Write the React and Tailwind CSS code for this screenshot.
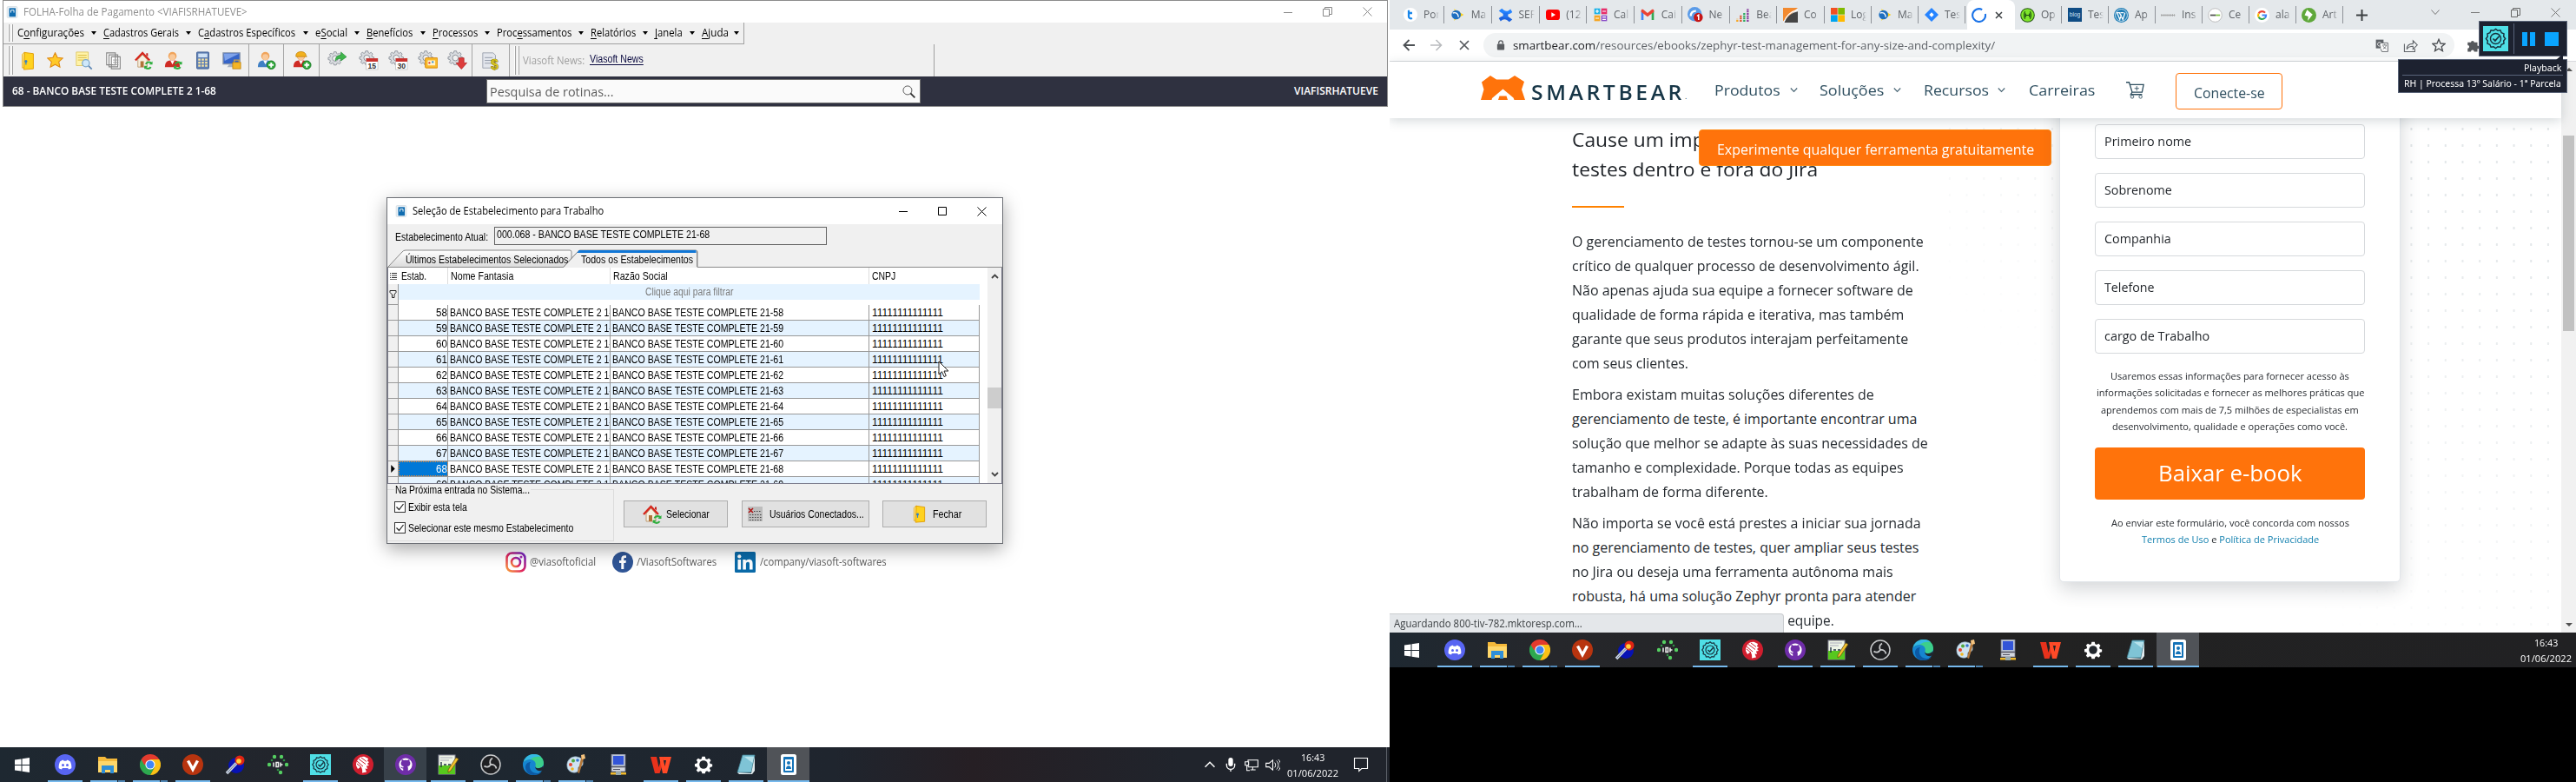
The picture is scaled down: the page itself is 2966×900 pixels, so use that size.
import React, { useLayoutEffect, useRef, useState } from 'react';

/* Single-line label condensed or widened to the given advance width. */
function T({ w, className = '', children }) {
  const ref = useRef(null);
  const [scale, setScale] = useState(1);
  useLayoutEffect(() => {
    const n = ref.current.offsetWidth;
    if (n) setScale(w / n);
  }, [w, children]);
  return (
    <span className={`block shrink-0 whitespace-nowrap ${className}`} style={{ width: w }}>
      <span ref={ref} className="inline-block origin-left" style={{ transform: `scaleX(${scale})` }}>
        {children}
      </span>
    </span>
  );
}

const Svg = ({ s = 24, vb = '0 0 24 24', className = '', children }) => (
  <svg width={s} height={s} viewBox={vb} className={`block shrink-0 ${className}`} fill="none">
    {children}
  </svg>
);

/* ---------- shared glyphs ---------- */
const GEAR = 'M10 1h4l.7 3 2 .9L19.400 3.300 22 6l-1.700 2.600.8 2 2.900.7v3.400l-3 .7-.8 2L21.900 20 19.400 22.300l-2.600-1.700-2 .8L14 24h-4l-.7-2.700-2-.8-2.700 1.700L2.100 19.700l1.700-2.500-.8-2L0 14.500v-3.600l3-.7.8-2L2.200 5.600 4.700 3.200l2.600 1.700 2-.9z';
const GearShape = ({ fill = '#d9dce0', stroke = '#8b9098' }) => (
  <g>
    <path d={GEAR} transform="translate(1 0) scale(.72)" fill={fill} stroke={stroke} strokeWidth="1.3" />
    <circle cx="9.700" cy="9" r="3.500" fill="#f0f0f0" stroke={stroke} />
  </g>
);
const Door = ({ s = 22 }) => (
  <Svg s={s}>
    <path d="M5 4l3-3v19l-3 1z" fill="#ffe88a" stroke="#e0a100" strokeWidth=".8" />
    <path d="M8 1.500L19 3v19L7 23z" fill="#ffd21f" stroke="#e09b00" strokeWidth="1" />
    <circle cx="9.700" cy="12.500" r="1.700" fill="#2d7fd0" />
    <path d="M9.700 13v4" stroke="#2d7fd0" strokeWidth="1.300" />
  </Svg>
);
const Refresh = () => (
  <g stroke="#2fae3f" strokeWidth="2.200" fill="none">
    <path d="M21.500 15.500c-2-2.300-6-1.800-7 1M13.500 20c1.500 2.500 5.500 2.500 7 0" />
    <path d="M22.500 13v4h-4zM12.700 22.500v-4h4z" fill="#2fae3f" stroke="none" />
  </g>
);
const House = ({ s = 24 }) => (
  <Svg s={s}>
    <path d="M5 11v9h11v-9l-5.500-6z" fill="#f7efe0" stroke="#b48a5a" strokeWidth=".8" />
    <path d="M2 12l8.500-9L19 12" stroke="#d5261b" strokeWidth="2.400" />
    <path d="M15 3.500h2v4l-2-2z" fill="#c3221a" />
    <path d="M8 20v-7h4v7z" fill="#b1733a" />
    <Refresh />
  </Svg>
);
const Person = ({ body = '#cf2b25', hair = '#f0a35a', hat, children }) => (
  <Svg s={23}>
    <path d="M2 20c0-6 3-7.500 6.500-8h5C17 12.500 20 14 20 20z" fill={body} />
    <path d="M8.500 12l2.500 5 2.500-5z" fill="#fff" />
    <circle cx="11" cy="6.800" r="5" fill={hair} />
    <circle cx="11" cy="8" r="3.600" fill="#f9c99a" />
    {hat && <path d="M5 6c0-6 12-6 12 0l1 1.500H5z" fill="#f2b01e" stroke="#b97a00" strokeWidth=".7" />}
    {children}
  </Svg>
);
const Plus = () => (
  <g>
    <circle cx="18" cy="17.500" r="5" fill="#2fa83a" stroke="#1c7c28" />
    <path d="M18 14.500v6M15 17.500h6" stroke="#fff" strokeWidth="2" />
  </g>
);
const Cal = ({ n }) => (
  <g>
    <rect x="9" y="10" width="14" height="13" fill="#fff" stroke="#bbb" strokeWidth=".7" />
    <rect x="9" y="9.500" width="14" height="4" fill="#c9302c" />
    <text x="16" y="22" textAnchor="middle" fontSize="9" fontWeight="700" fill="#333" fontFamily="Liberation Sans, sans-serif">{n}</text>
  </g>
);
const AppGlyph = () => (
  <Svg s={14}>
    <rect x="2" y="1" width="20" height="22" rx="2" fill="#eef3f7" stroke="#c5d0d8" />
    <rect x="6" y="4" width="13" height="17" fill="#0f6cb0" />
    <path d="M9.500 13V8h6v5" stroke="#fff" strokeWidth="1.600" />
  </Svg>
);
const TestComplete = ({ s = 24, bg = '#4fdfe6' }) => (
  <Svg s={s}>
    <rect width="24" height="24" fill={bg} />
    <path d="M12 2.800l2 1.600 2.500-.4 1 2.400 2.400 1-.3 2.500 1.600 2.100-1.600 2.100.3 2.500-2.400 1-1 2.400-2.500-.4-2 1.600-2-1.600-2.500.4-1-2.400-2.400-1 .3-2.500L2.800 12l1.600-2.100-.3-2.500 2.400-1 1-2.400 2.500.4z" stroke="#17313d" strokeWidth="1.200" />
    <circle cx="12" cy="12" r="5" stroke="#17313d" strokeWidth="1.200" />
    <path d="M9.500 12l2 2 4-4.500" stroke="#17313d" strokeWidth="1.400" />
  </Svg>
);

/* ---------- Windows taskbar ---------- */
const dockIcons = [
  <Svg><circle cx="12" cy="12" r="12" fill="#5865f2" /><path d="M6 8.500c2-1.500 3-1.700 4-1.800l.5 1h3l.5-1c1 .1 2 .3 4 1.800 1 2.500 1.600 5 1.300 7.500-1.200 1-2.500 1.300-3.300 1.500l-.8-1.500h-6.400L8 17.500c-.8-.2-2.100-.5-3.300-1.500C4.400 13.500 5 11 6 8.500z" fill="#fff" /><circle cx="9.500" cy="12.500" r="1.500" fill="#5865f2" /><circle cx="14.500" cy="12.500" r="1.500" fill="#5865f2" /></Svg>,
  <Svg><path d="M1 3h8l2 2h12v16H1z" fill="#f5b93a" /><path d="M1 8h22v13H1z" fill="#ffd76a" /><path d="M5 13h14v9h-4v-4H9v4H5z" fill="#2f8fd8" /></Svg>,
  <Svg><path d="M1.600 6A12 12 0 0 0 12 24l5.200-9L12 12z" fill="#2da94f" /><path d="M12 6h10.400a12 12 0 0 1-10.400 18l5-9z" fill="#fbc116" /><path d="M1.600 6A12 12 0 0 1 22.400 6H12v6H5z" fill="#e33b2e" /><circle cx="12" cy="12" r="5.600" fill="#fff" /><circle cx="12" cy="12" r="4.500" fill="#4086f4" /></Svg>,
  <Svg><circle cx="12" cy="12" r="12" fill="#b8340f" /><path d="M6.500 7.500L12 17.500l5.500-10" stroke="#fff" strokeWidth="3.400" /></Svg>,
  <Svg><circle cx="13" cy="13" r="9" fill="#0712b4" /><circle cx="17" cy="7" r="5.500" fill="#e02413" /><circle cx="16" cy="8" r="2.800" fill="#ffd23a" /><path d="M2 22L13 10.500" stroke="#c9d3e2" strokeWidth="3.500" /><path d="M3 21L13 10.500" stroke="#6d7a92" strokeWidth="1" /></Svg>,
  <Svg>{[[8, 3], [16, 3], [2, 12], [22, 12], [15, 21], [5, 7], [19, 7], [12, 18]].map(([x, y], i) => <circle key={i} cx={x} cy={y} r={i > 4 ? 1.300 : 2.200} fill={i > 4 ? '#2f8f45' : '#55cf62'} />)}<path d="M7 9.500v5M10 9.500v5h2.500v-5zM15 9.500v5M15 12h2.500" stroke="#f0f0f0" strokeWidth="1.500" /></Svg>,
  <TestComplete />,
  <Svg><circle cx="12" cy="12" r="12" fill="#d01e2e" /><path d="M4 13C4 7 8 2 14 3l4 2-1 3 2 1-2 2 2 2-3 .5 1 3.500-2.500-.5 1.500 4-5 1c.5-3 0-5-1.500-7L6 17z" fill="#fff" /><path d="M5 8l7 6M7 5.500l8 6M10 4l6 4.500M5 11l5 4" stroke="#d01e2e" strokeWidth="1" /></Svg>,
  <Svg><circle cx="12" cy="12" r="12" fill="#6f2da8" /><path d="M12 4.500a7.500 7.500 0 0 0-2.800 14.500v-2.600c-2 .3-2.600-1-3-1.900 1.500-.4 1.600 1 3 .9.100-.6.400-1 .7-1.300-2-.3-3.300-1.200-3.300-3.600 0-.9.300-1.600.9-2.200-.2-.7-.1-1.600.1-2.200.9 0 1.700.5 2.300.9a8 8 0 0 1 4.200 0c.6-.4 1.400-.9 2.300-.9.200.6.300 1.500.1 2.200.6.600.9 1.300.9 2.200 0 2.400-1.300 3.300-3.300 3.600.4.400.7 1 .7 2V19A7.500 7.500 0 0 0 12 4.500z" fill="#fff" /></Svg>,
  <Svg><rect x="1" y="1" width="19" height="22" fill="#eef5e6" stroke="#889" /><path d="M1 13h19v10H1z" fill="#57c81e" /><path d="M3 4h14M3 7h10" stroke="#aab" strokeWidth="1.200" /><path d="M4 9v6M7 12h3M12 12h3" stroke="#234" strokeWidth="1.400" /><path d="M12 18L21 4l3 1.500L15 19l-3 2z" fill="#f2c12e" stroke="#6b5310" strokeWidth=".8" /></Svg>,
  <Svg><circle cx="12" cy="12" r="11" fill="#1f2023" stroke="#c7c9cb" strokeWidth="1.500" /><path d="M12 12c-1.500-3-.5-6 2-7.500M12 12c3.500-.5 6 1.500 6.500 4.500M12 12c-2 3-5 3.500-7.500 1.500" stroke="#c7c9cb" strokeWidth="1.800" /></Svg>,
  <Svg><circle cx="12" cy="12" r="12" fill="#1686d0" /><path d="M1 9C3 2 9 0 13 0c7 0 11 5 11 10 0 4-3 6-6 6-3 0-4-1-3.500-2.500C16 9 12 6 8 6 4 6 2 7.500 1 9z" fill="#3ccf8b" /><path d="M1 9C3 2 9 0 13 0c3 0 6 1 8 3-5-1-9 0-13 3C4 6 2 7.500 1 9z" fill="#35b7e6" /><path d="M8 12c-1 6 3 10 9 10 2 0 4-1 5-2-2 3-6 4-10 4-5 0-9-4-9-9 0-4 3-6 6-6-1 1-1 2-1 3z" fill="#0c59a4" /><path d="M14 13.500c0 2 2 3 5 2.500 2-.4 4-1.500 4.500-3L24 18l-3 1c-4 1-7-2-7-5.500z" fill="#20262e" /></Svg>,
  <Svg><path d="M2 14C1 7 7 2 13 3c6 .6 8 5 7 9-1 3-4 1-5 3s1 5-3 6c-5 .8-9.500-2-10-7z" fill="#cfe3f1" stroke="#8da9bd" strokeWidth=".7" /><circle cx="6" cy="12" r="2" fill="#e0452f" /><circle cx="9" cy="7.500" r="2" fill="#4fa83e" /><circle cx="14" cy="7" r="1.800" fill="#3474cc" /><circle cx="8" cy="17" r="1.800" fill="#f0b51e" /><path d="M19 1l3 1-6 20-2-1z" fill="#b4783a" /><path d="M18 1l4-1 1 5-4 1z" fill="#f3c27e" /></Svg>,
  <Svg><rect x="4" y="0" width="16" height="14" fill="#b9c4d6" stroke="#778" strokeWidth=".8" /><rect x="6" y="2" width="12" height="10" fill="#3355d8" /><rect x="4" y="15" width="16" height="5" fill="#d3d8df" stroke="#778" strokeWidth=".8" /><path d="M6 17.500h8" stroke="#556" /><rect x="3" y="21" width="18" height="2.500" fill="#f0b92c" /><rect x="9" y="20" width="6" height="4" fill="#9aa" /></Svg>,
  <Svg><path d="M0 3h7l2.500 12L12 7l2.500 3-4 12H5z" fill="#e8321c" /><path d="M10 3h4l2.500 11L18 7h-3l-1-4h10l-5 19h-5z" fill="#ff4a27" /></Svg>,
  <Svg><path d={GEAR} transform="translate(2 2) scale(.84)" fill="#fff" /><circle cx="12" cy="12" r="4.800" fill="#22272d" /></Svg>,
  <Svg><path d="M8 1h14l-4 20H2z" fill="#7fc4d6" stroke="#3f7f92" strokeWidth=".8" /><path d="M10 3h11l-1.500 7z" fill="#b7e3ec" /><path d="M2 21l16 1 4-20v17l-3 4H4z" fill="#dfe9ec" /></Svg>,
  <Svg><rect x="3" y="0" width="18" height="24" rx="2.500" fill="#fff" /><rect x="6" y="3" width="12" height="18" rx="1" fill="#1573b8" /><rect x="8" y="6" width="8" height="13" fill="#fff" /><circle cx="12" cy="10" r="2" fill="#1573b8" /><path d="M9 17c0-5 6-5 6 0z" fill="#1573b8" /></Svg>,
];
const DOCK_LINES = { 0: 1, 1: 2, 2: 2, 3: 1, 6: 1, 8: 1, 9: 1, 10: 1, 11: 2, 12: 2, 14: 1, 15: 1, 16: 1, 17: 1 };

function Taskbar({ active, className, children }) {
  return (
    <div className={`flex h-10 shrink-0 items-center ${className}`}>
      <div className="flex h-full w-[50px] shrink-0 items-center justify-center">
        <Svg s={17} vb="0 0 17 17"><path d="M0 2.500L7.500 1.500V8H0zM8.500 1.300L17 0v8H8.500zM0 9h7.500v6.500L0 14.500zM8.500 9H17v8l-8.500-1.300z" fill="#fff" /></Svg>
      </div>
      {dockIcons.map((icon, i) => (
        <div key={i} className={`flex h-full w-[49px] shrink-0 flex-col items-center justify-between ${i === 17 ? 'bg-[#505358]' : active === i ? 'bg-[#38414a]' : ''}`}>
          <div className="mt-2">{icon}</div>
          {DOCK_LINES[i] && (
            <div className={`flex h-0.5 shrink-0 ${i === 17 || active === i ? 'w-[48px]' : 'w-10'}`}>
              <div className="flex-1 bg-[#76b9ed]" />
              {DOCK_LINES[i] === 2 && <div className="ml-px w-[8px] bg-[#4f86b4]" />}
            </div>
          )}
        </div>
      ))}
      <div className="flex-1" />
      {children}
    </div>
  );
}
const Clock = () => (
  <div className="flex w-[62px] shrink-0 flex-col items-center gap-[3px] text-[11.5px] leading-[15px] text-white">
    <T w={27}>16:43</T>
    <T w={59}>01/06/2022</T>
  </div>
);

/* ---------- FOLHA window ---------- */
const MENUS = [
  [['C', 'o', 'nfigurações'], 77, 22], [['', 'C', 'adastros Gerais'], 87, 22], [['C', 'a', 'dastros Específicos'], 112, 23],
  [['e', 'S', 'ocial'], 37, 22], [['', 'B', 'enefícios'], 53, 23], [['', 'P', 'rocessos'], 52, 22],
  [['Proc', 'e', 'ssamentos'], 86, 22], [['', 'R', 'elatórios'], 52, 22], [['', 'J', 'anela'], 32, 22], [['', 'A', 'juda'], 31, 18],
];
const Grip = () => (
  <div className="flex h-[calc(100%-4px)] w-[14px] shrink-0 items-stretch gap-[2px] pl-[5px]">
    <i className="w-[2px] border-r border-[#a0a0a0] bg-white" /><i className="w-[2px] border-r border-[#a0a0a0] bg-white" />
  </div>
);
const Cell = ({ w = 'w-[34px]', children }) => <div className={`flex h-full shrink-0 items-center justify-center ${w}`}>{children}</div>;
const Div = () => <div className="h-full w-px shrink-0 bg-[#a5a5a5]" />;

function FolhaWindow() {
  return (
    <div className="mx-[3px] flex h-[123px] w-[1595px] shrink-0 flex-col border border-[#8c8c8c] bg-[#f0f0f0] font-['Open_Sans',sans-serif]">
      <div className="flex h-[25px] shrink-0 items-center bg-white pl-[3px]">
        <AppGlyph />
        <T w={258} className="ml-[6px] text-[13px] text-[#8e8e8e]">FOLHA-Folha de Pagamento &lt;VIAFISRHATUEVE&gt;</T>
        <div className="flex-1" />
        <div className="flex items-center text-[#8a8a8a]">
          <Svg s={10} vb="0 0 10 10"><path d="M0 5.500h10" stroke="#888" /></Svg>
          <Svg s={11} vb="0 0 11 11" className="ml-[35px]"><path d="M.5 2.500h7v8h-7zM2.500 2V.5h8v8h-2.500" stroke="#888" /></Svg>
          <Svg s={11} vb="0 0 11 11" className="mr-[17px] ml-[35px]"><path d="M.5.5l10 10M10.500.5l-10 10" stroke="#888" /></Svg>
        </div>
      </div>
      <div className="flex h-[25px] w-[853px] shrink-0 items-center border-r border-b border-[#a0a0a0]">
        <Grip />
        <div className="flex items-center pl-[2px] text-[12px] text-black">
          {MENUS.map(([[a, u, b], w, gap], i) => (
            <div key={i} className="flex items-center">
              <T w={w}>{a}<span className="underline underline-offset-2">{u}</span>{b}</T>
              <div className="flex shrink-0 items-center justify-center" style={{ width: gap }}>
                <Svg s={6} vb="0 0 6 4"><path d="M0 0h6L3 4z" fill="#000" /></Svg>
              </div>
            </div>
          ))}
        </div>
      </div>
      <div className="flex h-[37px] w-[1072px] shrink-0 items-center border-r border-[#a0a0a0]">
        <Grip />
        <Cell w="w-[28px]"><Door /></Cell>
        <Cell><Svg s={19}><path d="M12 1l3.300 7 7.700.9-5.700 5.200 1.600 7.600L12 18l-6.900 3.700 1.600-7.600L1 8.900 8.700 8z" fill="#ffc928" stroke="#e08a12" strokeWidth="1.400" /></Svg></Cell>
        <Cell><Svg s={22}><path d="M2 1h15v17H2z" fill="#fff3a8" stroke="#d8bd4c" strokeWidth=".8" /><path d="M4 5h11M4 8h11M4 11h8" stroke="#d8b93c" /><circle cx="14" cy="15" r="4.500" fill="#cfe8fa" stroke="#7ca8cc" strokeWidth="1.400" /><path d="M17.500 18.500l4 4" stroke="#5f88b5" strokeWidth="2" /></Svg></Cell>
        <Cell><Svg s={22}><path d="M3 2h11v15H3zM6 4.500h11v15H6zM9 7h11v15H9z" fill="#fff" stroke="#858585" strokeWidth="1.200" /><path d="M11 11h7M11 14h7M11 17h7" stroke="#9a9a9a" /></Svg></Cell>
        <Cell><House s={23} /></Cell>
        <Cell><Person><Refresh /></Person></Cell>
        <Cell><Svg s={21}><rect x="4" y="1" width="16" height="22" rx="1" fill="#5f7fb4" stroke="#3f5f94" /><rect x="6" y="3" width="12" height="5" fill="#cfe2f5" /><path d="M6 11h12M6 15h12M6 19h12" stroke="#f5e3a4" strokeWidth="2.600" strokeDasharray="3 1.500" /></Svg></Cell>
        <Cell><Svg s={22}><rect x="1" y="2" width="21" height="14" fill="#3564c8" stroke="#8b97ab" strokeWidth="1.400" /><path d="M2 3h19L3 12z" fill="#7fa3ea" /><path d="M6 20h10l-2-4H9z" fill="#a8b2c0" /><rect x="13" y="14" width="10" height="8" fill="#f5b524" stroke="#b87d05" strokeWidth=".8" /><path d="M15 14v-3h6v3" stroke="#c9a04a" strokeWidth="1.500" /></Svg></Cell>
        <div className="w-[2px]" /><Div />
        <Cell w="w-[39px]"><Person body="#3f7fc4"><Plus /></Person></Cell><Div />
        <Cell w="w-[40px]"><Person hat><Plus /></Person></Cell><Div />
        <Cell w="w-[39px]"><Svg s={22}><GearShape /><path d="M10 12c0-5 3-7 7-7V1l7 6-7 5V9c-3 0-5 1-7 3z" fill="#3fb54a" stroke="#1f8a34" strokeWidth=".7" /></Svg></Cell>
        <Cell><Svg s={23}><GearShape /><Cal n="15" /></Svg></Cell>
        <Cell><Svg s={23}><GearShape /><Cal n="30" /></Svg></Cell>
        <Cell><Svg s={23}><GearShape /><rect x="9" y="9" width="15" height="12" rx="1" fill="#f8b92a" stroke="#d98a0b" /><rect x="12" y="12" width="9" height="6" fill="#fff4d0" /><circle cx="14" cy="15" r="1.200" fill="#d33" /><circle cx="18" cy="14" r="1.200" fill="#2a8fd0" /></Svg></Cell>
        <Cell><Svg s={23}><GearShape /><path d="M14 9h6v6h3.500L17 22.500 10.500 15H14z" fill="#dd3c3c" stroke="#b52222" strokeWidth=".8" /></Svg></Cell>
        <Div />
        <Cell w="w-[42px]"><Svg s={22}><path d="M2 2h13l3 3v16H2z" fill="#e3e6ec" stroke="#9aa1ac" /><path d="M4.500 8h10M4.500 11.500h10M4.500 15h10" stroke="#8f97a5" /><text x="17" y="22.500" textAnchor="middle" fontSize="17" fontWeight="700" fill="#f2dc1f" stroke="#8d7c00" strokeWidth=".7" fontFamily="Liberation Sans, sans-serif">$</text></Svg></Cell>
        <Div /><Grip />
        <T w={71} className="ml-px text-[12px] text-[#9f9f9f]">Viasoft News:</T>
        <T w={62} className="mb-[3px] ml-[6px] font-['Liberation_Sans',sans-serif] text-[12px] text-[#0a0a40]"><span className="underline underline-offset-2">Viasoft News</span></T>
      </div>
      <div className="flex h-[34px] shrink-0 items-center bg-[#2f3140] pl-[10px] text-white">
        <T w={235} className="text-[12px] font-semibold">68 - BANCO BASE TESTE COMPLETE 2 1-68</T>
        <div className="ml-[311px] flex h-[28px] w-[500px] items-center justify-between border border-[#6f6f6f] bg-[#fafafa] pr-[5px] pl-[3px]">
          <T w={142} className="text-[15px] text-[#5c5c5c]">Pesquisa de rotinas...</T>
          <Svg s={15}><circle cx="9.500" cy="9.500" r="8" stroke="#555" strokeWidth="1.500" /><path d="M15 15l8 8" stroke="#333" strokeWidth="3" /></Svg>
        </div>
        <div className="flex-1" />
        <T w={97} className="mr-[10px] text-[12px] font-semibold">VIAFISRHATUEVE</T>
      </div>
    </div>
  );
}

/* ---------- dialog ---------- */
const ROWS = [58, 59, 60, 61, 62, 63, 64, 65, 66, 67, 68, 69];
const Check = ({ w, children }) => (
  <div className="flex h-[13px] items-center">
    <div className="flex size-[13px] items-center justify-center border border-[#333] bg-white">
      <Svg s={11} vb="0 0 11 11"><path d="M1.500 5.500l3 3 5-6.500" stroke="#222" strokeWidth="1.200" /></Svg>
    </div>
    <T w={w} className="ml-[3px]">{children}</T>
  </div>
);
const Btn = ({ className, children }) => (
  <div className={`flex h-[31px] shrink-0 items-center border border-[#adadad] bg-[#e1e1e1] ${className}`}>{children}</div>
);

function Dialog() {
  return (
    <div className="absolute top-[227px] left-[445px] flex h-[399px] w-[710px] flex-col border border-[#6d7076] bg-[#f0f0f0] font-['Liberation_Sans',sans-serif] text-[12px] leading-[14px] text-black shadow-[0_6px_20px_rgba(0,0,0,0.35)]">
      <div className="flex h-[30px] shrink-0 items-center bg-white pl-[9px] font-['Open_Sans',sans-serif]">
        <AppGlyph />
        <T w={220} className="ml-[6px] text-[12.5px]">Seleção de Estabelecimento para Trabalho</T>
        <div className="flex-1" />
        <Svg s={10} vb="0 0 10 10"><path d="M0 5.500h10" stroke="#000" /></Svg>
        <Svg s={10} vb="0 0 10 10" className="ml-[35px]"><path d="M.5.5h9v9h-9z" stroke="#000" /></Svg>
        <Svg s={11} vb="0 0 11 11" className="mr-[18px] ml-[35px]"><path d="M.5.5l10 10M10.500.5l-10 10" stroke="#000" /></Svg>
      </div>
      <div className="mt-[3px] flex h-[21px] shrink-0 items-center pl-[9px]">
        <T w={107} className="pt-[3px]">Estabelecimento Atual:</T>
        <div className="ml-[7px] flex h-[21px] w-[383px] border border-[#646464] pt-px pl-[2px]"><T w={245}>000.068 - BANCO BASE TESTE COMPLETE 21-68</T></div>
      </div>
      <div className="relative mt-[5px] h-[21px] shrink-0">
        <svg width="708" height="21" className="absolute inset-0 block" fill="none">
          <defs><linearGradient id="tabShade" x1="0" y1="0" x2="0" y2="1"><stop offset="0" stopColor="#fff" /><stop offset="1" stopColor="#dcdcdc" /></linearGradient></defs>
          <path d="M1 20L17 3q1.500-2 4-2h189q2 0 2 2v17" fill="url(#tabShade)" stroke="#888" />
          <path d="M0 20.500H203L219 3q1-2 3-2h133q2 0 2 2v17.500H708" stroke="#8a8a8a" />
          <path d="M203.500 20.500L219 3l2-1.500h135V21H204z" fill="#f0f0f0" />
          <path d="M203 20L219 3" stroke="#888" />
          <path d="M220.500 1h135v3h-137z" fill="#0f76d6" />
          <path d="M356.500 2v18" stroke="#888" />
        </svg>
        <div className="relative flex pt-[5px] pl-[21px]">
          <T w={187}>Últimos Estabelecimentos Selecionados</T>
          <T w={129} className="ml-[15px]">Todos os Estabelecimentos</T>
        </div>
      </div>
      <div className="flex h-[249px] shrink-0 border-x border-b border-[#7b7b8b] bg-white">
        <div className="flex h-full w-[681px] flex-col overflow-hidden">
          <div className="flex h-[19px] shrink-0 items-center">
            <div className="flex w-[12px] justify-center"><Svg s={8} vb="0 0 8 8"><path d="M0 .5h1M2 .5h6M0 3h1M2 3h6M0 5.500h1M2 5.500h6M0 7.800h8" stroke="#333" /></Svg></div>
            <div className="flex h-full w-[57px] items-center border-r border-[#ddd] pl-[3px]"><T w={29}>Estab.</T></div>
            <div className="flex h-full w-[187px] items-center border-r border-[#ddd] pl-[3px]"><T w={72}>Nome Fantasia</T></div>
            <div className="flex h-full w-[298px] items-center border-r border-[#ddd] pl-[3px]"><T w={63}>Razão Social</T></div>
            <div className="flex items-center pl-[3px]"><T w={27}>CNPJ</T></div>
          </div>
          <div className="flex h-[24px] shrink-0">
            <div className="flex w-[12px] items-center justify-center border-r border-b border-[#999] bg-[#f0f0f0]"><Svg s={9} vb="0 0 9 9"><path d="M1 .5h7v2L6 5v3.500H3.500V5L1 2.500z" stroke="#222" /></Svg></div>
            <div className="flex h-[18px] flex-1 items-center justify-center bg-[#e5f3ff] text-[#7a7a7a]"><T w={101}>Clique aqui para filtrar</T></div>
          </div>
          {ROWS.map((n) => (
            <div key={n} className="flex h-[18px] shrink-0">
              <div className="flex w-[12px] shrink-0 items-center justify-center border-r border-b border-[#999] bg-[#f0f0f0]">
                {n === 68 && <Svg s={9} vb="0 0 8 8"><path d="M2 0l4 4-4 4z" fill="#000" /></Svg>}
              </div>
              <div className={`flex flex-1 border-b border-[#999] ${n % 2 ? 'bg-[#e5f3ff]' : 'bg-white'}`}>
                <div className={`flex w-[57px] items-center justify-end border-r border-[#999] pr-px ${n === 68 ? 'bg-[#0078d7] text-white outline-1 -outline-offset-1 outline-dotted outline-[#e08a3c]' : ''}`}><T w={12.500}>{n}</T></div>
                <div className="flex w-[187px] items-center overflow-hidden border-r border-[#999] pl-[2px]"><div className="w-[184px] overflow-hidden"><T w={199}>{`BANCO BASE TESTE COMPLETE 2 1-${n}`}</T></div></div>
                <div className="flex w-[298px] items-center border-r border-[#999] pl-[2px]"><T w={197}>{`BANCO BASE TESTE COMPLETE 21-${n}`}</T></div>
                <div className="flex flex-1 items-center border-r border-[#999] pl-[3px]"><T w={82}>11111111111111</T></div>
              </div>
            </div>
          ))}
        </div>
        <div className="ml-[9px] flex w-[16px] flex-col items-center bg-[#f0f0f0] py-[6px]">
          <Svg s={9} vb="0 0 9 9"><path d="M1 6l3.500-3.500L8 6" stroke="#444" strokeWidth="1.800" /></Svg>
          <div className="mt-[123px] h-[24px] w-full bg-[#cdcdcd]" />
          <div className="flex-1" />
          <Svg s={9} vb="0 0 9 9"><path d="M1 3l3.500 3.500L8 3" stroke="#444" strokeWidth="1.800" /></Svg>
        </div>
      </div>
      <div className="flex flex-1">
        <div className="mt-[6px] mb-[2px] flex w-[261px] flex-col border-t border-r border-b border-[#dcdcdc] pl-[8px]">
          <div className="-mt-[7px] self-start bg-[#f0f0f0] px-px"><T w={155}>Na Próxima entrada no Sistema...</T></div>
          <div className="mt-[6px]"><Check w={68}>Exibir esta tela</Check></div>
          <div className="mt-[11px]"><Check w={190}>Selecionar este mesmo Estabelecimento</Check></div>
        </div>
        <div className="flex flex-1 pt-[19px] pl-[11px]">
          <Btn className="w-[120px] pl-[20px]"><House s={24} /><T w={50} className="ml-[4px]">Selecionar</T></Btn>
          <Btn className="ml-[16px] w-[147px] pl-[6px]">
            <Svg s={17} vb="0 0 17 17"><rect width="17" height="17" fill="#bdbdbd" /><path d="M1 2l5 5M6 2L1 7" stroke="#b01212" strokeWidth="1.500" /><path d="M7 5.500h9M2 9.500h14M2 12.500h14M2 15.500h14" stroke="#444" strokeDasharray="1.500 1.500" /></Svg>
            <T w={109} className="ml-[8px]">Usuários Conectados...</T>
          </Btn>
          <Btn className="ml-[15px] w-[120px] pl-[31px]"><Door s={21} /><T w={33} className="ml-[5px]">Fechar</T></Btn>
        </div>
      </div>
      <svg width="13" height="20" viewBox="0 0 13 20" className="absolute top-[187px] left-[634px] block"><path d="M1 1v15l3.500-3.300L7 18.500l2.300-1L7 12h5z" fill="#fff" stroke="#222" /></svg>
    </div>
  );
}

const Social = () => (
  <div className="mt-[512px] ml-[582px] flex h-6 items-center font-['Open_Sans',sans-serif] text-[13px] text-[#5b5b5b]">
    <Svg>
      <defs><linearGradient id="insta" x1="0" y1="1" x2="1" y2="0"><stop offset="0" stopColor="#f9a03a" /><stop offset=".45" stopColor="#e0245e" /><stop offset="1" stopColor="#6a25c9" /></linearGradient></defs>
      <rect x="1.500" y="1.500" width="21" height="21" rx="6" stroke="url(#insta)" strokeWidth="2.600" /><circle cx="12" cy="12" r="5" stroke="url(#insta)" strokeWidth="2.600" /><circle cx="18" cy="6" r="1.500" fill="#a02ab0" />
    </Svg>
    <T w={76} className="ml-[4px]">@viasoftoficial</T>
    <Svg className="ml-[19px]"><circle cx="12" cy="12" r="12" fill="#2f5596" /><path d="M10.300 20v-7H8v-3h2.300V8c0-2.500 1.500-3.800 3.800-3.800l1.900.1V7h-1.400c-1.100 0-1.300.6-1.300 1.300V10h2.600l-.4 3h-2.200v7z" fill="#fff" /></Svg>
    <T w={92} className="ml-[4px]">/ViasoftSoftwares</T>
    <Svg className="ml-[21px]"><rect width="24" height="24" rx="1.500" fill="#0a6aa8" /><path d="M3.500 9h3.600v11.500H3.500zM9.300 9h3.400v1.600c.6-1.100 1.800-1.900 3.600-1.900 3.600 0 4.300 2.300 4.300 5.400v6.400H17v-5.700c0-1.400 0-3.100-1.900-3.100s-2.200 1.500-2.200 3v5.800H9.300z" fill="#fff" /><circle cx="5.300" cy="5.400" r="2.100" fill="#fff" /></Svg>
    <T w={146} className="ml-[5px]">/company/viasoft-softwares</T>
  </div>
);

/* ---------- browser ---------- */
const Arrow = () => <Svg s={16}><path d="M6 2l17 10L6 22 10 12z" fill="#fcd116" /><circle cx="10" cy="12" r="8" fill="#1d6fc0" /><path d="M4 9c6-2 9 1 10 7" stroke="#fff" strokeWidth="2" /></Svg>;
const tabsA = [
  [<Svg s={16}><circle cx="12" cy="12" r="12" fill="#fff" /><path d="M9 4v11c0 3 3 4 6 3M9 9h6" stroke="#1987ea" strokeWidth="3.400" /></Svg>, 'Por'],
  [<Arrow />, 'Mai'],
  [<Svg s={17}><path d="M1 5l5-4c5 5 9 6 14 1l3 5c-7 6-14 5-22-2z" fill="#2684ff" /><path d="M23 19l-5 4c-5-5-9-6-14-1l-3-5c7-6 14-5 22 2z" fill="#1c62dd" /><rect x="8" y="8" width="8" height="8" fill="#2274f0" /></Svg>, 'SEF'],
  [<Svg s={16}><rect y="3" width="24" height="18" rx="5" fill="#f00" /><path d="M9.500 8v8l7-4z" fill="#fff" /></Svg>, '(12'],
  [<Svg s={16}><path d="M1 1h10v10H1z" fill="#1db3e8" /><path d="M13 1h10v10H13z" fill="#e62e6b" /><path d="M1 13h10v10H1z" fill="#f5a623" /><path d="M13 13h10v10H13z" fill="#8a4fc8" /><path d="M3 6h6M6 3v6M15 6h6M3 18h6M15 16h6M15 20h6" stroke="#fff" strokeWidth="1.800" /></Svg>, 'Cal'],
  [<Svg s={16}><path d="M1 21V5l4 3v13z" fill="#4285f4" /><path d="M23 21V5l-4 3v13z" fill="#34a853" /><path d="M1 5c0-2 2-3 4-1.500L12 9l7-5.500C21 2 23 3 23 5v2L12 15.500 1 7z" fill="#ea4335" /></Svg>, 'Cai'],
  [<Svg s={18}><circle cx="11" cy="11" r="11" fill="#5a9be8" /><path d="M5 14c0-5 3-8 8-8" stroke="#fff" strokeWidth="3" /><circle cx="16.500" cy="16" r="7" fill="#c71616" /><path d="M14.500 14l2.500-1.800V20" stroke="#fff" strokeWidth="2" /></Svg>, 'Ne'],
  [<Svg s={16}><path d="M2 24v-5" stroke="#f5a623" strokeWidth="3.500" strokeDasharray="3 1" /><path d="M8 24V12" stroke="#e0542e" strokeWidth="3.500" strokeDasharray="3 1" /><path d="M14 24V8" stroke="#2fa860" strokeWidth="3.500" strokeDasharray="3 1" /><path d="M20 24V2" stroke="#8a3fa0" strokeWidth="3.500" strokeDasharray="3 1" /></Svg>, 'Bea'],
  [<Svg s={17}><path d="M0 0h24L0 22z" fill="#f28a30" /><path d="M24 6v18H2C6 14 14 8 24 6z" fill="#454545" /><path d="M1 24C5 12 13 6 24 3" stroke="#fff" strokeWidth="1.500" /></Svg>, 'Co'],
  [<Svg s={16}><path d="M0 0h11.500v11.500H0z" fill="#f25022" /><path d="M12.500 0H24v11.500H12.500z" fill="#7fba00" /><path d="M0 12.500h11.500V24H0z" fill="#00a4ef" /><path d="M12.500 12.500H24V24H12.500z" fill="#ffb900" /></Svg>, 'Log'],
  [<Arrow />, 'Ma'],
  [<Svg s={16}><path d="M12 0l12 12-12 12L0 12z" fill="#2684ff" /><path d="M12 8l4 4-4 4-4-4z" fill="#fff" /></Svg>, 'Tes'],
];
const tabsB = [
  [<Svg s={17}><circle cx="12" cy="12" r="11" fill="#7fe52a" stroke="#2b5a1a" strokeWidth="1.500" /><path d="M8 6c-2 3-2 9 0 12M16 6c2 3 2 9 0 12M9 9v6M15 9v6M9 12h6" stroke="#1c4a12" strokeWidth="1.700" /></Svg>, 'Op'],
  [<Svg s={16}><rect width="24" height="24" fill="#0f4c84" /><text x="12" y="15" textAnchor="middle" fontSize="10" fill="#cfe3f5" fontFamily="Liberation Sans, sans-serif">blog</text></Svg>, 'Tes'],
  [<Svg s={17}><circle cx="12" cy="12" r="12" fill="#1f7db5" /><circle cx="12" cy="12" r="9.800" stroke="#fff" /><path d="M5 8l4.500 11L12 11M9 8l5.500 11L18 8M4 8h6M10.500 8H16" stroke="#fff" strokeWidth="1.800" /></Svg>, 'Ap'],
  [<Svg s={17}><path d="M1 10v4M4 10v4M7 10v4M10 10v4M13 10v4M16 10v4M19 10v4M22 10v4M0 12h23" stroke="#9a9a9a" strokeWidth="1" /></Svg>, 'Ins'],
  [<Svg s={17}><circle cx="12" cy="12" r="11" fill="#fff" stroke="#aaa" /><path d="M4 12h9" stroke="#555" strokeWidth="2.500" /><path d="M13 12h7" stroke="#7fc34a" strokeWidth="2.500" /></Svg>, 'Ce'],
  [<Svg s={17}><circle cx="12" cy="12" r="12" fill="#fff" /><path d="M17 8a6.500 6.500 0 0 0-10.500 1" stroke="#ea4335" strokeWidth="3" /><path d="M6.500 9a6.500 6.500 0 0 0 0 6" stroke="#fbbc05" strokeWidth="3" /><path d="M6.500 15a6.500 6.500 0 0 0 10 1.700" stroke="#34a853" strokeWidth="3" /><path d="M12 12h6.500a6.500 6.500 0 0 1-2 4.700" stroke="#4285f4" strokeWidth="3" /></Svg>, 'ala'],
  [<Svg s={17}><circle cx="12" cy="12" r="12" fill="#5fa83a" /><path d="M9 3l9 8-8 10 1-7-6-2z" fill="#fff" /></Svg>, 'Art'],
];
const Tab = ({ icon, text, wide }) => (
  <div className={`flex h-full shrink-0 items-center ${wide ? 'w-[54.75px]' : 'w-[54px]'}`}>
    <div className="flex w-[17px] justify-center">{icon}</div>
    <div className="ml-[7px] w-[18px] overflow-hidden text-[12px] whitespace-nowrap text-[#5f6368] [mask-image:linear-gradient(to_right,#000_65%,transparent)]">{text}</div>
    <div className="ml-[5px] h-5 w-px bg-[#8e9298]" />
  </div>
);

const NavChevron = () => <Svg s={9} vb="0 0 9 9"><path d="M.8 2.500L4.500 6.300 8.200 2.500" stroke="#4a6675" strokeWidth="1.200" /></Svg>;

const PARAS = [
  [['O gerenciamento de testes tornou-se um componente', 405], ['crítico de qualquer processo de desenvolvimento ágil.', 400], ['Não apenas ajuda sua equipe a fornecer software de', 392.500], ['qualidade de forma rápida e iterativa, mas também', 382], ['garante que seus produtos interajam perfeitamente', 387.500], ['com seus clientes.', 134.500]],
  [['Embora existam muitas soluções diferentes de', 347.500], ['gerenciamento de teste, é importante encontrar uma', 397], ['solução que melhor se adapte às suas necessidades de', 410], ['tamanho e complexidade. Porque todas as equipes', 381.500], ['trabalham de forma diferente.', 225.500]],
  [['Não importa se você está prestes a iniciar sua jornada', 402], ['no gerenciamento de testes, quer ampliar seus testes', 399], ['no Jira ou deseja uma ferramenta autônoma mais', 370], ['robusta, há uma solução Zephyr pronta para atender', 396], ['às necessidades exclusivas da sua equipe.', 302]],
];

function Browser() {
  return (
    <div className="relative flex h-[728px] shrink-0 flex-col overflow-hidden bg-white font-['Open_Sans',sans-serif]">
      <div className="flex h-[34px] shrink-0 items-center bg-[#e4e8eb] pl-[15px]">
        {tabsA.map(([icon, t], i) => <div key={i} className="h-full"><Tab icon={icon} text={t} wide={i < 8} /></div>)}
        <div className="-ml-[4px] flex h-full w-[55px] shrink-0 items-center rounded-t-lg bg-white pl-[5px]">
          <Svg s={17}><path d="M19 20A10.500 10.500 0 1 1 22.500 12" stroke="#1a73e8" strokeWidth="3" transform="rotate(-60 12 12)" /></Svg>
          <Svg s={9} vb="0 0 9 9" className="ml-[10px]"><path d="M1 1l7 7M8 1L1 8" stroke="#3c4043" strokeWidth="1.500" /></Svg>
        </div>
        <div className="flex h-full items-center pl-[6px]">
          {tabsB.map(([icon, t], i) => <div key={i} className="h-full"><Tab icon={icon} text={t} /></div>)}
        </div>
        <Svg s={13} vb="0 0 13 13" className="ml-[9px]"><path d="M6.500 0v13M0 6.500h13" stroke="#3c4043" strokeWidth="2" /></Svg>
        <div className="flex-1" />
        <div className="mb-[6px] flex items-center">
          <Svg s={10} vb="0 0 10 10"><path d="M.5 2.500L5 7.500l4.500-5" stroke="#777" /></Svg>
          <Svg s={10} vb="0 0 10 10" className="ml-[36px]"><path d="M0 5.500h10" stroke="#777" /></Svg>
          <Svg s={11} vb="0 0 11 11" className="ml-[36px]"><path d="M.5 2.500h7v8h-7zM2.500 2V.5h8v8h-2.500" stroke="#666" /></Svg>
          <Svg s={11} vb="0 0 11 11" className="mr-[18px] ml-[35px]"><path d="M.5.5l10 10M10.500.5l-10 10" stroke="#777" /></Svg>
        </div>
      </div>
      <div className="flex h-[37px] shrink-0 items-center border-b border-[#d8dadd] bg-white pl-[15px]">
        <Svg s={14} vb="0 0 14 14"><path d="M14 7H1.500M7.500 1L1.500 7l6 6" stroke="#4d5155" strokeWidth="1.800" /></Svg>
        <Svg s={14} vb="0 0 14 14" className="ml-[18px]"><path d="M0 7h12.500M6.500 1l6 6-6 6" stroke="#b9bbbe" strokeWidth="1.600" /></Svg>
        <Svg s={12} vb="0 0 12 12" className="ml-[19px]"><path d="M1 1l10 10M11 1L1 11" stroke="#55585c" strokeWidth="1.700" /></Svg>
        <div className="ml-[16px] flex h-7 w-[1118px] items-center rounded-full bg-[#f1f3f4] pl-[14px] text-[13.5px] text-[#5f6368]">
          <Svg s={12} vb="0 0 10 13"><rect x=".5" y="5" width="9" height="7.500" rx="1" fill="#5a5d61" /><path d="M2.500 5V3.500a2.500 2.500 0 0 1 5 0V5" stroke="#5a5d61" strokeWidth="1.500" /></Svg>
          <T w={555} className="ml-[8px]"><span className="text-[#202124]">smartbear.com</span>/resources/ebooks/zephyr-test-management-for-any-size-and-complexity/</T>
          <div className="flex-1" />
          <Svg s={15} className="mr-[17px]"><rect x="1" y="1" width="14" height="16" fill="#5f6368" /><path d="M10 7h13v16H12l-2-5" fill="#fff" stroke="#5f6368" strokeWidth="1.500" /><path d="M13 11h8M17 9v2M20 11c-1 4-3 6-6 7M14 12c1 3 4 5 6 6" stroke="#5f6368" strokeWidth="1.300" /><path d="M10.500 7.500a3.500 3.500 0 1 0 .5 2.500H8" stroke="#fff" strokeWidth="1.400" /></Svg>
          <Svg s={17} className="mr-[16px]"><path d="M2 9v13h17v-5M6 18c0-6 4-9 10-9V4l7 7-7 7v-5c-5 0-8 1-10 5z" stroke="#5f6368" strokeWidth="1.500" /></Svg>
          <Svg s={16} className="mr-[10px]"><path d="M12 2l3 7 7.500.6-5.700 5 1.800 7.400L12 18l-6.600 4 1.800-7.400-5.700-5L9 9z" stroke="#4a4d51" strokeWidth="2" /></Svg>
        </div>
        <Svg s={15} className="ml-[14px]"><path d="M2 6h6a3 3 0 1 1 6 0h6v6a3 3 0 1 1 0 6v5h-6a3 3 0 1 0-6 0H2v-6a3 3 0 1 0 0-6z" fill="#55585c" /></Svg>
      </div>

      <div className="flex h-[657px] shrink-0">
        <div className="flex w-[1349px] shrink-0 flex-col">
          <div className="relative z-10 flex h-[65px] shrink-0 items-center bg-white pl-[105px] text-[17px] text-[#2f4f60] shadow-[0_3px_12px_rgba(60,80,90,0.22)]">
            <svg width="51" height="28" viewBox="0 0 51 28" className="-mt-[5px] block shrink-0"><path d="M0 28l3.500-12L1 7.500 11 0l7 4.500h14L39 0l11 7-3 9 4 12H38.500l-1-2.500L25.500 15.500 13 26l-.5 2z" fill="#ff730b" /><path d="M20 28l1.500-4.500h8L31 28z" fill="#ff730b" /></svg>
            <T w={177} className="mt-[4px] ml-[7px] text-[24px] leading-none font-semibold tracking-[3.5px] text-[#173647]">SMARTBEAR</T>
            <span className="mt-[14px] w-[5px] text-[9px] leading-none">.</span>
            <T w={76} className="ml-[29px]">Produtos</T><span className="ml-[11px]"><NavChevron /></span>
            <T w={74} className="ml-[25px]">Soluções</T><span className="ml-[11px]"><NavChevron /></span>
            <T w={75} className="ml-[26px]">Recursos</T><span className="ml-[10px]"><NavChevron /></span>
            <T w={76} className="ml-[27px]">Carreiras</T>
            <Svg s={21} className="ml-[36px]"><path d="M0 2h4l4 13h13l2-10H5" stroke="#2f4f60" strokeWidth="1.500" /><path d="M8 15l-2 3h15" stroke="#2f4f60" strokeWidth="1.500" /><circle cx="8" cy="21" r="2" stroke="#2f4f60" /><circle cx="19" cy="21" r="2" stroke="#2f4f60" /><path d="M14 7v6M11 10h6" stroke="#2f4f60" /></Svg>
            <div className="mt-[3px] ml-[36px] flex h-[42px] w-[123px] items-center justify-center rounded-[4px] border-[1.5px] border-[#ff730b] pt-[3px] text-[16px]"><T w={82}>Conecte-se</T></div>
          </div>
          <div className="relative flex h-[592px] shrink-0 overflow-hidden">
            <div className="absolute inset-y-0 right-0 w-[720px] bg-[radial-gradient(circle,#e3e7e9_1.1px,transparent_1.500px)] bg-[size:19.700px_19px] bg-[position:6px_3px] [mask-image:linear-gradient(to_bottom_left,#000_15%,transparent_68%)]" />
            <div className="relative flex w-[561px] shrink-0 flex-col pl-[210px] text-[#1f2328]">
              <div className="mt-[8px] text-[22.5px] leading-[33.500px]">
                <T w={349}>Cause um impacto maior com os</T>
                <T w={283}>testes dentro e fora do Jira</T>
              </div>
              <div className="mt-[26px] h-[2px] w-[60px] shrink-0 bg-[#ff8200]" />
              <div className="mt-[25px] flex flex-col gap-[8px] text-[16px] leading-[28px] text-[#262b30]">
                {PARAS.map((p, i) => (
                  <div key={i}>{p.map(([s, w]) => <T key={s} w={w}>{s}</T>)}</div>
                ))}
              </div>
              <div className="absolute top-[13px] left-[356px] flex h-[42px] w-[406px] items-center justify-center rounded-[4px] border border-[#ff8a14] bg-[#ff730b] pt-[3px] text-[16px] font-medium text-white"><T w={365}>Experimente qualquer ferramenta gratuitamente</T></div>
            </div>
            <div className="relative -mt-[40px] ml-[210px] flex h-[574px] w-[393px] shrink-0 flex-col rounded-[5px] border border-[#e2e5ea] bg-white px-[40px] pt-[46px] text-[#1f2328] shadow-[0_8px_22px_rgba(40,50,60,0.20)]">
              <div className="flex flex-col gap-4 text-[14.500px]">
                {[['Primeiro nome', 100], ['Sobrenome', 78], ['Companhia', 77], ['Telefone', 58], ['cargo de Trabalho', 121]].map(([s, w]) => (
                  <div key={s} className="flex h-10 items-center rounded-[4px] border border-[#d6d9dc] bg-white pl-[10px]"><T w={w}>{s}</T></div>
                ))}
              </div>
              <div className="mt-[16px] flex flex-col items-center text-[11.500px] leading-[19.300px]">
                <T w={275}>Usaremos essas informações para fornecer acesso às</T>
                <T w={308}>informações solicitadas e fornecer as melhores práticas que</T>
                <T w={297}>aprendemos com mais de 7,5 milhões de especialistas em</T>
                <T w={271}>desenvolvimento, qualidade e operações como você.</T>
              </div>
              <div className="mt-[15px] flex h-[60px] w-[311px] shrink-0 items-center justify-center rounded-[4px] bg-[#ff730b] text-[25px] text-white"><T w={166}>Baixar e-book</T></div>
              <div className="mt-[17px] flex flex-col items-center text-[11.500px] leading-[19px]">
                <T w={274}>Ao enviar este formulário, você concorda com nossos</T>
                <T w={204}><span className="text-[#107fae]">Termos de Uso</span> e <span className="text-[#107fae]">Política de Privacidade</span></T>
              </div>
            </div>
          </div>
        </div>
        <div className="flex w-[17px] shrink-0 flex-col items-center bg-[#f1f1f1]">
          <Svg s={8} vb="0 0 8 8" className="mt-[5px]"><path d="M0 6l4-4 4 4z" fill="#505050" /></Svg>
          <div className="mt-[72px] h-[225px] w-[13px] bg-[#c1c1c1]" />
          <div className="flex-1" />
          <Svg s={8} vb="0 0 8 8" className="mb-[5px]"><path d="M0 2l4 4 4-4z" fill="#505050" /></Svg>
        </div>
      </div>

      <div className="absolute bottom-0 left-0 flex h-[22px] w-[454px] items-center rounded-tr-[4px] border-t border-r border-[#c9cccf] bg-[#e4e7ea] pl-[5px] text-[12px] text-[#3c4043]"><T w={217}>Aguardando 800-tiv-782.mktoresp.com...</T></div>

      <div className="absolute top-[24px] right-[10px] z-20 flex flex-col items-end">
        <div className="flex h-[41px] w-[102px] items-center border border-[#5a6478] bg-[#1d2230] pl-[4px]">
          <TestComplete s={29} />
          <div className="ml-[6px] h-[35px] w-px bg-[#59647a]" />
          <div className="ml-[9px] h-4 w-[6px] bg-[#0aa5ff]" /><div className="ml-[3px] h-4 w-[6px] bg-[#0aa5ff]" />
          <div className="ml-[11px] size-4 bg-[#0aa5ff]" />
        </div>
        <div className="mt-[3px] flex h-[39px] w-[195px] flex-col items-end border border-[#5a6478] bg-[#1d2230] px-[4px] font-['Noto_Sans',sans-serif] text-[11.500px] leading-[17px] text-white">
          <T w={43} className="mr-[2px]">Playback</T>
          <div className="h-px w-full bg-[#59647a]" />
          <T w={181} className="mr-[2px]">RH | Processa 13º Salário - 1ª Parcela</T>
        </div>
        <svg width="8" height="7" viewBox="0 0 8 7" className="absolute top-[38px] right-[5px] block"><path d="M0 7L8 0v7z" fill="#1d2230" /></svg>
      </div>
    </div>
  );
}

export default function App() {
  return (
    <div className="flex h-[900px] w-[2966px] overflow-hidden bg-white">
      <div className="relative flex w-[1600px] shrink-0 flex-col">
        <FolhaWindow />
        <div className="flex-1"><Social /></div>
        <Dialog />
        <Taskbar active={8} className="bg-[#1f2630] bg-[linear-gradient(90deg,#1e2831,#22252c_20%,#1e2730_35%,#1f252e_60%,#261f24_70%,#20242c_85%)] font-['Open_Sans',sans-serif]">
          <Svg s={12} vb="0 0 11 11"><path d="M.5 8l5-5 5 5" stroke="#fff" strokeWidth="1.400" /></Svg>
          <Svg s={16} className="ml-[10px]"><rect x="8" y="0" width="8" height="15" rx="4" fill="#fff" /><path d="M5 10v3a7 7 0 0 0 14 0v-3M12 20v4" stroke="#fff" strokeWidth="2" /></Svg>
          <Svg s={16} className="ml-[8px]"><path d="M6 4h17v12H6zM14 16v5M10 21h9" stroke="#fff" strokeWidth="1.600" /><path d="M1 7h6v6H1zM4 13v9h5" stroke="#fff" strokeWidth="1.600" fill="#1f252e" /></Svg>
          <Svg s={17} className="ml-[8px]"><path d="M1 9h5l6-5v16l-6-5H1z" stroke="#fff" strokeWidth="1.500" /><path d="M15 8c2 2 2 6 0 8M18 5c4 4 4 10 0 14M21 3c5 5 5 13 0 18" stroke="#fff" strokeWidth="1.400" /></Svg>
          <div className="ml-[6px]"><Clock /></div>
          <Svg s={18} className="mr-[20px] ml-[16px]"><path d="M2 2h20v16H13l-4 4v-4H2z" stroke="#fff" strokeWidth="1.500" /></Svg>
          <div className="mr-[3px] h-full w-px bg-[#5b6068]" />
        </Taskbar>
      </div>
      <div className="flex w-[1366px] shrink-0 flex-col bg-black">
        <Browser />
        <Taskbar className="bg-[linear-gradient(90deg,#1e2831,#26272b_14%,#222_50%,#212123)] font-['Open_Sans',sans-serif]">
          <div className="mr-[4px]"><Clock /></div>
        </Taskbar>
      </div>
    </div>
  );
}
